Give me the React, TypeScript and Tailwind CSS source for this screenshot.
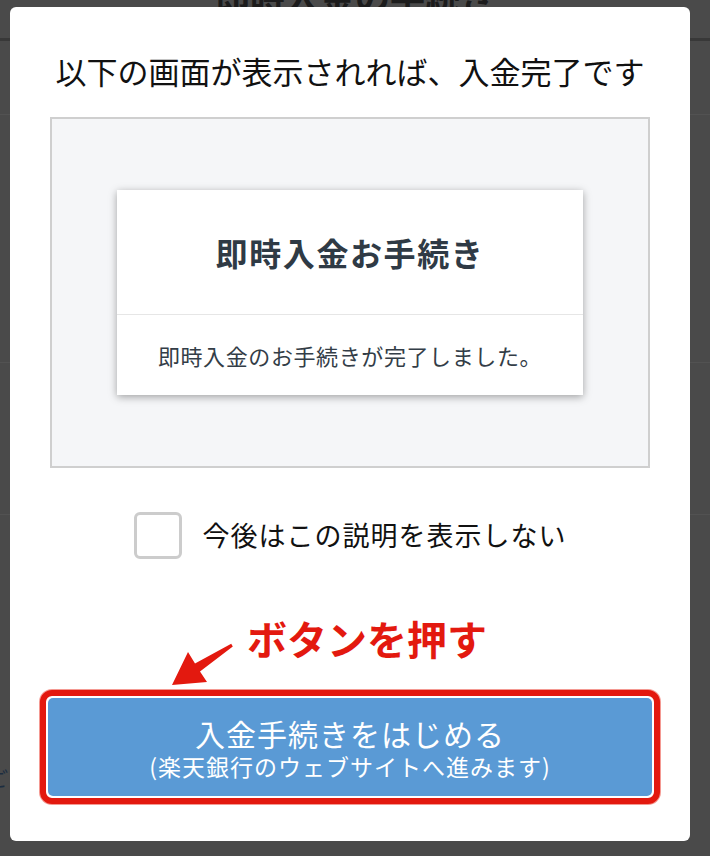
const FONT = { fontFamily: '"Noto Sans CJK JP", "Noto Sans", sans-serif' };

function Arrow() {
  // tapered arrow pointing down-left at the button
  return (
    <svg width="68" height="50" viewBox="0 0 68 50" className="shrink-0 mt-[24px]">
      <polygon
        points="4,45 20,12 27,23.5 63.2,3.8 64.8,6.6 32,31.5 39,42"
        fill="#e3190f"
      />
    </svg>
  );
}

export default function App() {
  return (
    <div className="relative w-[710px] h-[856px] overflow-hidden bg-[#4a4a4a]" style={FONT}>
      {/* page behind the overlay */}
      <div className="flex flex-col">
        <div className="h-[38px] flex justify-center">
          <p className="mt-[-22px] text-[35px] font-bold leading-none text-[#1c1c1c]">即時入金の手続き</p>
        </div>
        <div className="h-[3px] bg-[#383838]" />
        <div className="h-[74px] border-b border-[#525252]" />
        <div className="h-[248px] border-b border-[#525252]" />
        <div className="h-[152px] border-b border-[#525252]" />
        <div className="h-[274px] flex items-end">
          <span className="ml-[-12px] text-[20px] leading-none text-[#1c2d40]">ご</span>
        </div>
      </div>

      {/* modal */}
      <div className="absolute left-[10px] top-[7px] w-[680px] h-[834px] bg-white rounded-[6px] flex flex-col">
        <h2 className="mt-[44px] text-center text-[31px] leading-[40px] text-[#111]">
          以下の画面が表示されれば、入金完了です
        </h2>

        <div className="mx-[40px] mt-[26px] h-[351px] border-2 border-[#cfcfcf] bg-[#f5f6f8] flex items-center justify-center">
          <div className="w-[466px] h-[205px] bg-white shadow-[0_2px_8px_rgba(0,0,0,0.35)] flex flex-col">
            <div className="h-[125px] flex items-center justify-center border-b border-[#e6e6e6]">
              <p className="text-[32px] font-bold tracking-[1.6px] text-[#2f3a45]">即時入金お手続き</p>
            </div>
            <div className="flex-1 flex items-center justify-center">
              <p className="text-[22px] tracking-[0.6px] text-[#333d47]">即時入金のお手続きが完了しました。</p>
            </div>
          </div>
        </div>

        <div className="mt-[44px] flex items-center justify-center gap-[21px]">
          <div className="w-[48px] h-[47px] rounded-[6px] border-[3px] border-[#cccccc] bg-white" />
          <p className="text-[27px] tracking-[1px] text-[#111]">今後はこの説明を表示しない</p>
        </div>

        <div className="mt-[57px] h-[54px] flex items-start pl-[158px] gap-[11px]">
          <Arrow />
          <p className="mt-[-6px] text-[40px] font-bold leading-[56px] text-[#e3190f]">ボタンを押す</p>
        </div>

        <div className="mt-[20px] mx-[30px] rounded-[12px] border-[6px] border-[#e3190f] bg-white p-[2px] shadow-[0_0_0_1px_rgba(240,110,100,0.7)]">
          <button className="w-full h-[98px] rounded-[5px] bg-[#5a9ad5] text-white flex flex-col items-center justify-center pt-[2px]">
            <span className="text-[30px] leading-[36px] tracking-[1px]">入金手続きをはじめる</span>
            <span className="text-[23px] leading-[30px] tracking-[1px]">(楽天銀行のウェブサイトへ進みます)</span>
          </button>
        </div>
      </div>
    </div>
  );
}
